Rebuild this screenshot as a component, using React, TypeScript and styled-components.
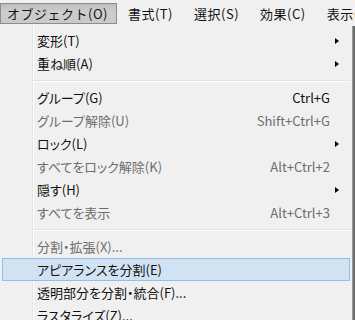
import React from 'react';
import styled, { createGlobalStyle } from 'styled-components';

const GlobalStyle = createGlobalStyle`
  html, body {
    margin: 0;
    padding: 0;
    background: #f0f0f0;
  }
  body {
    font-family: "Noto Sans CJK JP", "Noto Sans", sans-serif;
    color: #000;
  }
`;

const Screen = styled.div`
  width: 355px;
  height: 320px;
  overflow: hidden;
  background: #f0f0f0;
`;

const MenuBar = styled.div`
  display: flex;
  align-items: center;
  height: 26px;
  box-sizing: border-box;
  padding-top: 1px;
  font-size: 13px;
  letter-spacing: 0.5px;
`;

const BarItem = styled.div<{ $pressed?: boolean }>`
  height: 21px;
  display: flex;
  align-items: center;
  flex-shrink: 0;
  box-sizing: border-box;
  padding: ${(p) => (p.$pressed ? '0 8.5px 0 6px' : '0 9.5px')};
  line-height: 1;
  white-space: nowrap;
  border: 1px solid ${(p) => (p.$pressed ? '#8c8c8c' : 'transparent')};
  background: ${(p) =>
    p.$pressed ? 'linear-gradient(#bdbdbd, #cdcdcd 40%, #c9c9c9)' : 'transparent'};
  color: #111;
`;

const Dropdown = styled.div`
  width: 353px;
  box-sizing: border-box;
  padding: 3px 2px 0 2px;
  border-right: 1px solid #9a9a9a;
  display: flex;
  flex-direction: column;
  font-size: 13px;
  font-feature-settings: "palt";
  background-color: #f0f0f0;
  background-image: linear-gradient(
    to right,
    transparent 32px,
    #e2e3e3 32px,
    #e2e3e3 33px,
    #ffffff 33px,
    #ffffff 34px,
    transparent 34px
  );
  box-shadow: 2px 0 0 #6e6e6e;
`;

const Row = styled.div<{ $disabled?: boolean; $active?: boolean }>`
  display: flex;
  align-items: center;
  height: 23px;
  flex-shrink: 0;
  box-sizing: border-box;
  padding-left: 35px;
  line-height: 1;
  color: ${(p) => (p.$disabled ? '#6d6d6d' : '#111')};
  border: 1px solid ${(p) => (p.$active ? '#8fbfee' : 'transparent')};
  background: ${(p) => (p.$active ? '#d1e2f2' : 'transparent')};
`;

const Label = styled.span`
  flex: 1;
  white-space: nowrap;
  margin-left: -1px;
`;

const Shortcut = styled.span`
  white-space: nowrap;
  font-feature-settings: normal;
`;

const ArrowCell = styled.span`
  width: 19px;
  display: flex;
  align-items: center;
  padding-left: 5px;
  box-sizing: border-box;
`;

const Triangle = styled.span`
  width: 0;
  height: 0;
  border-top: 3.5px solid transparent;
  border-bottom: 3.5px solid transparent;
  border-left: 4px solid #000;
`;

const Separator = styled.div`
  height: 11px;
  flex-shrink: 0;
  display: flex;
  align-items: center;
  padding-left: 31px;
  &::after {
    content: '';
    flex: 1;
    height: 1px;
    background: #e0e0e0;
    border-bottom: 1px solid #ffffff;
  }
`;

type Item =
  | { sep: true }
  | { label: string; shortcut?: string; sub?: boolean; disabled?: boolean; active?: boolean };

const items: Item[] = [
  { label: '変形(T)', sub: true },
  { label: '重ね順(A)', sub: true },
  { sep: true },
  { label: 'グループ(G)', shortcut: 'Ctrl+G' },
  { label: 'グループ解除(U)', shortcut: 'Shift+Ctrl+G', disabled: true },
  { label: 'ロック(L)', sub: true },
  { label: 'すべてをロック解除(K)', shortcut: 'Alt+Ctrl+2', disabled: true },
  { label: '隠す(H)', sub: true },
  { label: 'すべてを表示', shortcut: 'Alt+Ctrl+3', disabled: true },
  { sep: true },
  { label: '分割・拡張(X)...', disabled: true },
  { label: 'アピアランスを分割(E)', active: true },
  { label: '透明部分を分割・統合(F)...' },
  { label: 'ラスタライズ(Z)...' },
];

const App: React.FC = () => {
  return (
    <Screen>
      <GlobalStyle />
      <MenuBar>
        <BarItem $pressed>オブジェクト(O)</BarItem>
        <BarItem>書式(T)</BarItem>
        <BarItem>選択(S)</BarItem>
        <BarItem>効果(C)</BarItem>
        <BarItem>表示(V)</BarItem>
      </MenuBar>
      <Dropdown>
        {items.map((it, i) =>
          'sep' in it ? (
            <Separator key={i} />
          ) : (
            <Row key={i} $disabled={it.disabled} $active={it.active}>
              <Label>{it.label}</Label>
              {it.shortcut && <Shortcut>{it.shortcut}</Shortcut>}
              <ArrowCell>{it.sub && <Triangle />}</ArrowCell>
            </Row>
          )
        )}
      </Dropdown>
    </Screen>
  );
};

export default App;
